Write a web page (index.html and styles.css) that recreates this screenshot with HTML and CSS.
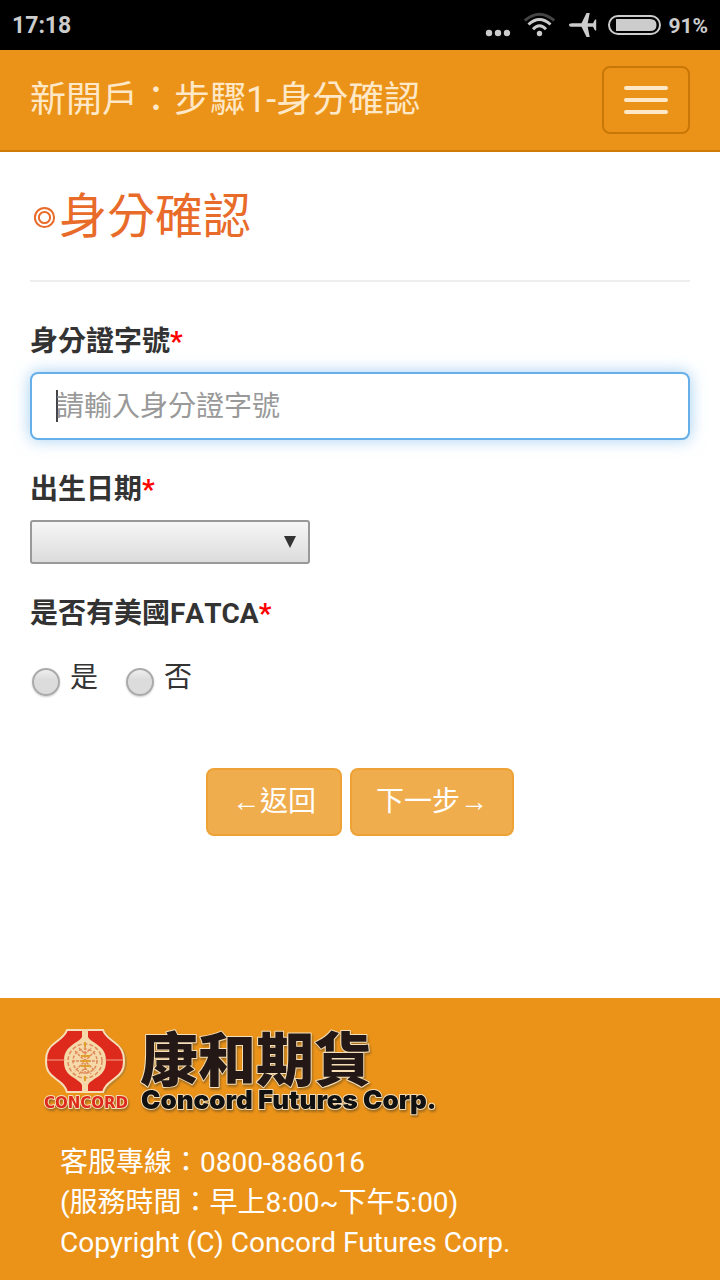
FILE: index.html
```html
<!DOCTYPE html>
<html lang="zh-Hant-TW">
<head>
  <meta charset="UTF-8">
  <meta name="viewport" content="width=device-width, initial-scale=1.0">
  <title>新開戶：步驟1-身分確認</title>
  <link rel="stylesheet" href="styles.css">
</head>
<body>
  <!-- Status bar -->
  <div class="status-bar">
    <span class="status-time">17:18</span>
    <svg class="status-icons" width="176" height="30" viewBox="0 1 176 30" aria-hidden="true">
      <g fill="#ccc">
        <circle cx="4" cy="23" r="3.200"/>
        <circle cx="13" cy="23" r="3.200"/>
        <circle cx="22" cy="23" r="3.200"/>
        <circle cx="54.500" cy="23.500" r="2.700"/>
      </g>
      <g fill="none" stroke="#ccc" stroke-width="3">
        <path d="M39.800 10.500Q54.500 -2 69.200 10.500" stroke="#444"/>
        <path d="M43.500 14.500Q54.500 4.500 65.500 14.500"/>
        <path d="M48 19.200Q54.500 12.500 61 19.200"/>
      </g>
      <path fill="#ccc" d="M84 15q0-1.800 3-1.800h9.500L101.500 3h3.200l-2 10.200h5.300l2-3.700h1.200v11h-1.200l-2-3.700h-5.300l2 10.200h-3.200l-5-10.200H87q-3 0-3-1.800z"/>
      <rect x="124" y="6" width="51" height="18" rx="9" fill="none" stroke="#ccc" stroke-width="2"/>
      <path fill="#ccc" d="M131 9h34q6.500 0 6.500 6t-6.500 6h-34z"/>
    </svg>
    <span class="status-battery">91%</span>
  </div>

  <!-- Navbar -->
  <nav class="navbar">
    <a class="navbar-brand" href="#">新開戶：步驟1-身分確認</a>
    <button type="button" class="navbar-toggle" aria-label="選單">
      <span class="icon-bar"></span>
      <span class="icon-bar"></span>
      <span class="icon-bar"></span>
    </button>
  </nav>

  <main class="container">
    <h3 class="page-title">
      <svg width="29" height="30" viewBox="0 0 29 30" fill="none" stroke="#e96b2a" stroke-width="2" aria-hidden="true">
        <circle cx="14.500" cy="15.500" r="9.600"/>
        <circle cx="14.500" cy="15.500" r="5.600"/>
      </svg>
      <span>身分確認</span>
    </h3>

    <form>
      <div class="form-group">
        <label for="idno">身分證字號<span class="required">*</span></label>
        <input type="text" id="idno" class="form-control active" placeholder="請輸入身分證字號">
      </div>

      <div class="form-group">
        <label for="birthday">出生日期<span class="required">*</span></label>
        <div class="select-box">
          <select id="birthday">
            <option value=""></option>
          </select>
        </div>
      </div>

      <fieldset class="form-group">
        <legend>是否有美國FATCA<span class="required">*</span></legend>
        <div class="radio-group">
          <label class="radio-inline"><input type="radio" name="fatca" value="Y">是</label>
          <label class="radio-inline"><input type="radio" name="fatca" value="N">否</label>
        </div>
      </fieldset>

      <div class="buttons">
        <button type="button" class="btn"><span class="arrow">←</span>返回</button>
        <button type="button" class="btn">下一步<span class="arrow">→</span></button>
      </div>
    </form>
  </main>

  <footer class="footer">
    <svg class="logo" width="420" height="110" viewBox="0 -10 420 110" role="img" aria-label="康和期貨 Concord Futures Corp.">
      <!-- Emblem -->
      <path d="M38 14h38c3 6 8 8 13 13 5 4 8 9 8 17s-3 13-8 17c-5 5-10 7-13 14H38z" fill="#9a7a3c" opacity="0.5"/>
      <path d="M37 12h36c2 6 6 8 11 12 7 5 10 10 10 19s-3 13-10 18c-5 4-9 6-11 13H37c-2-7-6-9-11-13-7-5-10-9-10-18s3-14 10-19c5-4 9-6 11-12z" fill="#dd2a1c" stroke="#f6dfb8" stroke-width="2"/>
      <path d="M52 11h6v8c2 4 7 5 11 9 5 4 7 8 7 15s-2 11-7 15c-4 3-9 5-11 9v7h-6v-7c-2-4-7-6-11-9-5-4-7-8-7-15s2-11 7-15c4-4 9-5 11-9z" fill="#f6d9a8"/>
      <path d="M17 42h18M75 42h18" stroke="#f0a58a" stroke-width="1"/>
      <g fill="none" stroke="#e08a5c" stroke-width="1.500">
        <circle cx="55" cy="43" r="17" stroke-dasharray="4 2"/>
        <circle cx="55" cy="43" r="12" stroke-dasharray="3 2"/>
        <path d="M45 33l20 20M65 33L45 53M42 43h26M55 29v28M49 30l6 6 6-6M49 56l6-6 6 6" stroke-dasharray="3 1"/>
      </g>
      <path d="M51 38h9M51 43h9M51 48h9M55 24v5M55 58v5" stroke="#e0a02c" stroke-width="2"/>
      <text class="logo-mark" x="56" y="90" text-anchor="middle">CONCORD</text>
      <!-- Wordmark -->
      <text class="logo-name" x="110" y="63">康和期貨</text>
      <text class="logo-sub" x="111" y="91">Concord Futures Corp.</text>
    </svg>
    <p class="footer-text">
      客服專線：0800-886016<br>
      (服務時間：早上8:00~下午5:00)<br>
      Copyright (C) Concord Futures Corp.
    </p>
  </footer>
</body>
</html>
```
FILE: styles.css
```css
* {
  box-sizing: border-box;
}
body {
  margin: 0;
  min-height: 100vh;
  display: flex;
  flex-direction: column;
  font-family: Roboto, "Noto Sans CJK TC", sans-serif;
  font-size: 28px;
  line-height: 40px;
  color: #333;
  background: #fff;
}
input, select, button {
  font-family: inherit;
  font-size: inherit;
  line-height: inherit;
}

/* Status bar */
.status-bar {
  display: flex;
  align-items: center;
  height: 50px;
  padding: 2px 12px 0;
  background: #000;
  color: #ccc;
  font-weight: bold;
}
.status-time {
  font-size: 23px;
  margin-right: auto;
}
.status-icons {
  margin-right: 7px;
}
.status-battery {
  font-size: 21px;
}

/* Navbar */
.navbar {
  display: flex;
  align-items: center;
  justify-content: space-between;
  padding: 16px 30px;
  background: #eb9319;
  border-bottom: 2px solid #d07c0a;
}
.navbar-brand {
  font-size: 36px;
  color: #ffe8c8;
  text-decoration: none;
}
.navbar-toggle {
  display: flex;
  flex-direction: column;
  gap: 8px;
  padding: 18px 20px;
  background: transparent;
  border: 2px solid #c97706;
  border-radius: 8px;
}
.icon-bar {
  width: 44px;
  height: 4px;
  border-radius: 2px;
  background: #ffe8c8;
}

/* Form */
.container {
  flex: 1;
  padding: 0 30px 40px;
}
.page-title {
  display: flex;
  align-items: center;
  margin: 0 0 40px;
  padding: 35px 0 33px;
  border-bottom: 2px solid #eee;
  font-size: 48px;
  line-height: 60px;
  font-weight: normal;
  color: #e96b2a;
}
.form-group {
  margin: 0 0 30px;
  padding: 0;
  border: 0;
}
.form-group > label,
legend {
  display: block;
  margin-bottom: 10px;
  padding: 0;
  font-weight: bold;
  font-kerning: none;
}
.required {
  color: #f00;
}
.form-control {
  display: block;
  width: 100%;
  height: 68px;
  padding: 12px 24px;
  border: 2px solid #ccc;
  border-radius: 8px;
  background: #fff;
  color: #555;
}
.form-control::placeholder {
  color: #999;
  opacity: 1;
}
.form-control.active {
  border-color: #66afe9;
  outline: 0;
  box-shadow: 0 0 16px rgba(102, 175, 233, 0.6);
  background: linear-gradient(#444, #444) 24px 16px / 2px 32px no-repeat #fff;
}
.select-box {
  position: relative;
  max-width: 280px;
}
.select-box select {
  display: block;
  width: 100%;
  height: 44px;
  appearance: none;
  border: 2px solid #999;
  border-radius: 3px;
  background: linear-gradient(#f6f6f6, #dcdcdc);
}
.select-box::after {
  content: '';
  position: absolute;
  top: 16px;
  right: 14px;
  width: 12px;
  height: 12px;
  background: #333;
  clip-path: polygon(0 0, 100% 0, 50% 100%);
  pointer-events: none;
}
.radio-group {
  display: flex;
  gap: 28px;
  padding: 14px 2px 0;
}
.radio-inline {
  display: flex;
  align-items: flex-end;
  gap: 10px;
}
.radio-inline input {
  appearance: none;
  width: 28px;
  height: 28px;
  margin: 0 0 2px;
  border: 2px solid #aaa;
  border-radius: 50%;
  background: linear-gradient(#eee, #dcdcdc 40%);
  box-shadow: 0 1px 2px rgba(0, 0, 0, 0.2);
}
.radio-inline input:checked {
  background: radial-gradient(#555 6px, #dcdcdc 7px);
}
.buttons {
  display: flex;
  justify-content: center;
  gap: 8px;
  padding-top: 40px;
}
.btn {
  height: 68px;
  padding: 12px 24px;
  border: 2px solid #eea236;
  border-radius: 8px;
  background: #f0ad4e;
  color: #fff;
}
.arrow {
  font-family: "Liberation Serif", serif;
}

/* Footer */
.footer {
  padding: 10px 30px 17px;
  background: #eb9319;
  color: #fff;
}
.logo {
  display: block;
  max-width: 100%;
  margin-bottom: 25px;
}
.logo text {
  paint-order: stroke;
  stroke: #f6dfb8;
  stroke-width: 2px;
  stroke-linejoin: round;
  filter: drop-shadow(1px 2px 1px rgba(110, 80, 30, 0.6));
}
.logo-mark {
  font: bold 15px "DejaVu Sans", sans-serif;
  fill: #dd2a1c;
}
.logo-name {
  font: 900 58px "Noto Sans CJK TC", sans-serif;
  fill: #231815;
}
.logo-sub {
  font: 900 26px Inter, sans-serif;
  fill: #111;
}
.footer-text {
  margin: 0;
  padding-left: 30px;
}
```
